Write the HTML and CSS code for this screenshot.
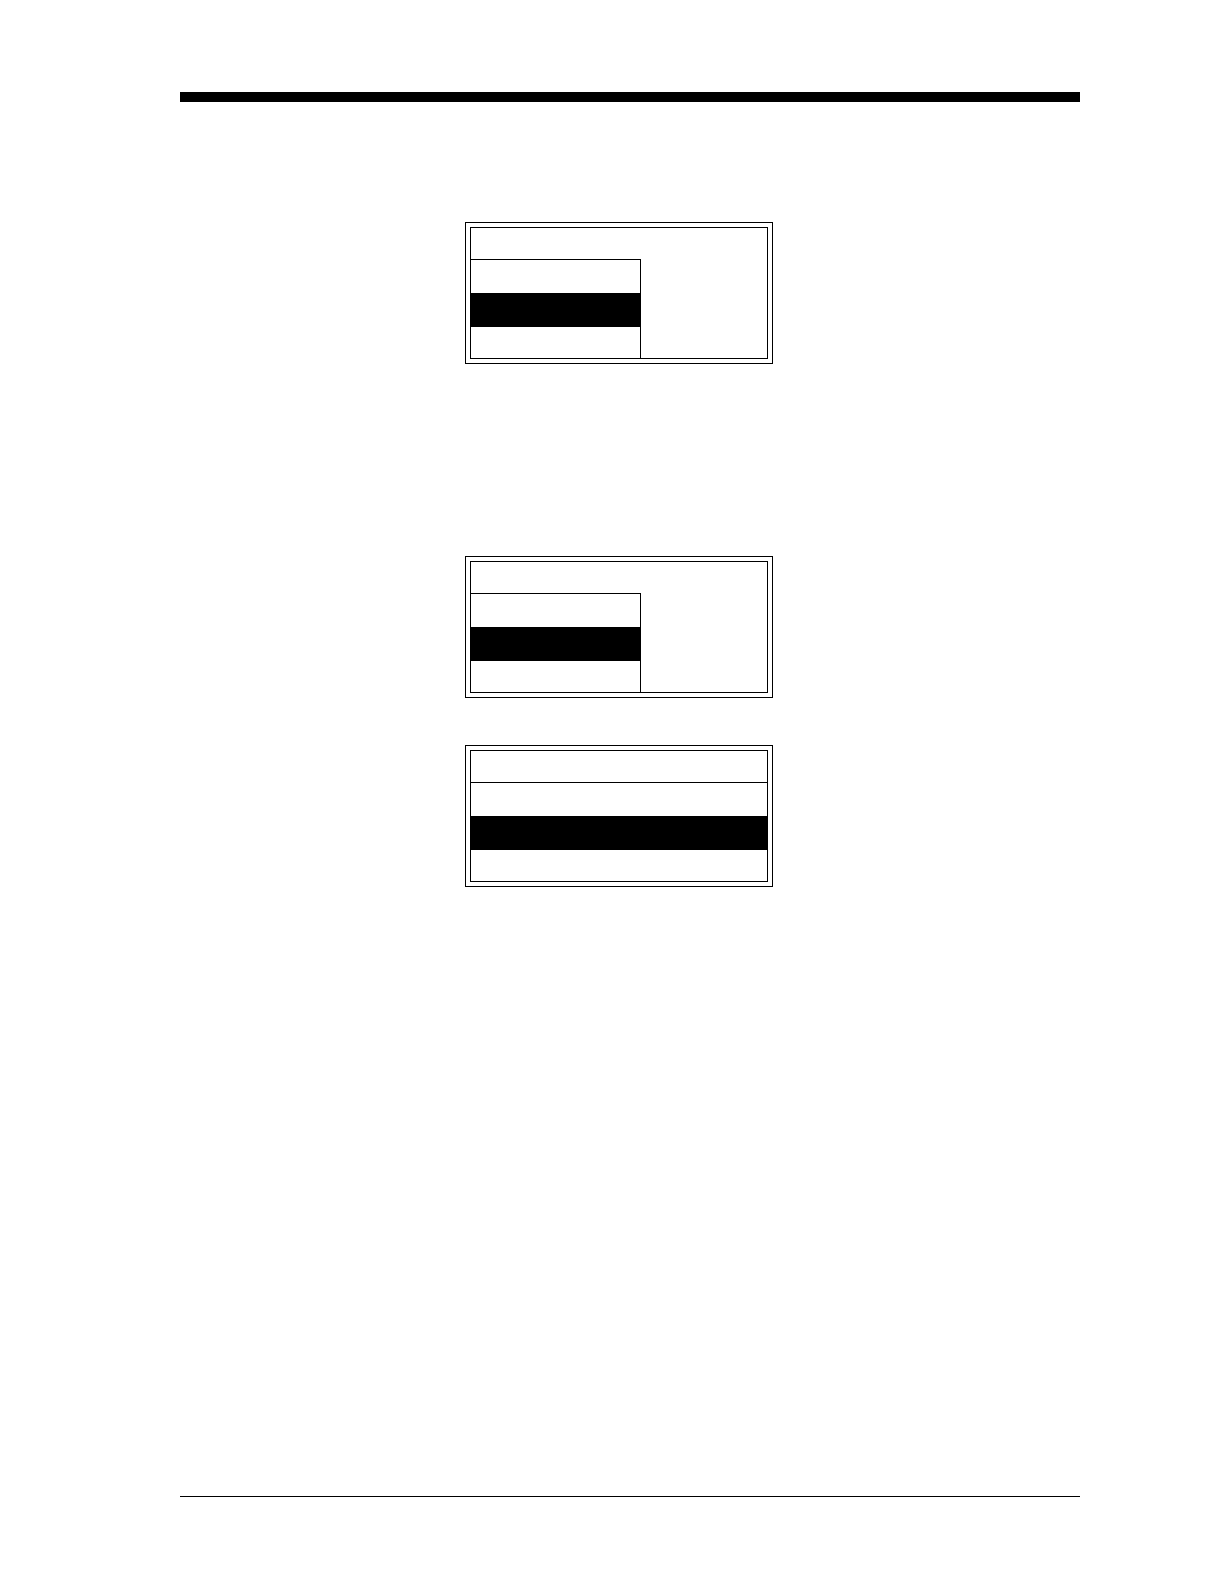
FILE: index.html
```html
<!DOCTYPE html>
<html lang="en">
<head>
    <meta charset="UTF-8">
    <meta name="viewport" content="width=device-width, initial-scale=1.0">
    <link rel="stylesheet" href="styles.css">
</head>
<body>
    <header class="page-header"></header>

    <main class="content">
        <section class="step">
            <div class="display">
                <div class="screen">
                    <div class="screen-title"></div>
                    <ul class="menu">
                        <li class="menu-item"></li>
                        <li class="menu-item selected"></li>
                        <li class="menu-item last"></li>
                    </ul>
                </div>
            </div>
        </section>

        <section class="step">
            <div class="display">
                <div class="screen">
                    <div class="screen-title"></div>
                    <ul class="menu">
                        <li class="menu-item"></li>
                        <li class="menu-item selected"></li>
                        <li class="menu-item last"></li>
                    </ul>
                </div>
            </div>
            <div class="display">
                <div class="screen">
                    <div class="screen-title"></div>
                    <ul class="menu wide">
                        <li class="menu-item"></li>
                        <li class="menu-item selected"></li>
                        <li class="menu-item last"></li>
                    </ul>
                </div>
            </div>
        </section>
    </main>

    <footer class="page-footer"></footer>
</body>
</html>
```
FILE: styles.css
```css
* {
    box-sizing: border-box;
}
body {
    font-family: "Liberation Sans", Arial, sans-serif;
    background-color: #fff;
    color: #000;
    display: flex;
    flex-direction: column;
    min-height: 100vh;
    margin: 0;
    padding: 92px 144px 0 180px;
}
.page-header {
    height: 10px;
    background-color: #000;
}
.content {
    flex: 1;
    display: flex;
    flex-direction: column;
    gap: 192px;
    padding: 120px 22px 0 0;
}
.step {
    display: flex;
    flex-direction: column;
    align-items: center;
    gap: 47px;
}

/* LCD panel with a double frame */
.display {
    width: 100%;
    max-width: 308px;
    padding: 4px;
    border: 1px solid #000;
}
.screen {
    border: 1px solid #000;
}
.screen-title {
    height: 31px;
}
.menu {
    width: 170px;
    margin: 0;
    padding: 0;
    list-style: none;
    border-top: 1px solid #000;
    border-right: 1px solid #000;
}
.menu.wide {
    width: 100%;
    border-right: none;
}
.menu-item {
    height: 33px;
}
.menu-item.selected {
    height: 34px;
    background-color: #000;
}
.menu-item.last {
    height: 31px;
}

.page-footer {
    height: 88px;
    border-top: 1px solid #000;
}
```
